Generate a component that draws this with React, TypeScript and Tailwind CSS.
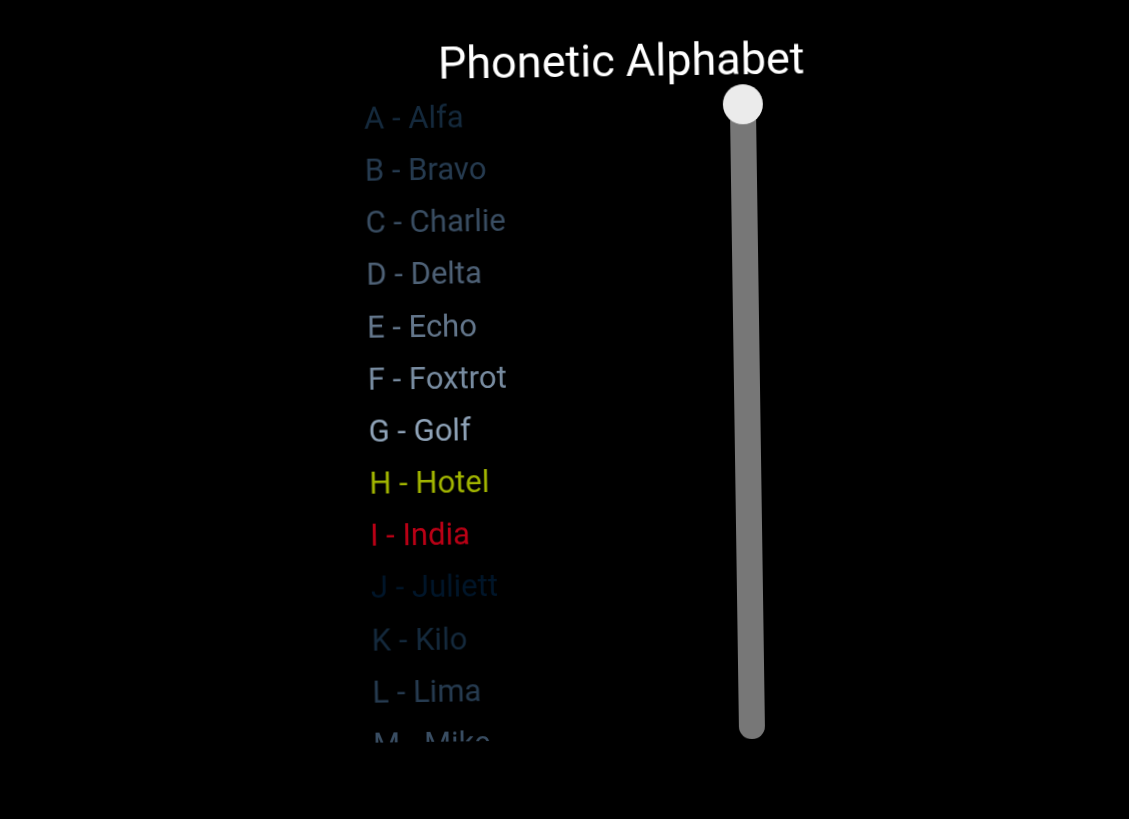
import { useState } from 'react';

const words = [
  { text: 'A - Alfa', color: 'text-[#14293c]' },
  { text: 'B - Bravo', color: 'text-[#263b50]' },
  { text: 'C - Charlie', color: 'text-[#394d62]' },
  { text: 'D - Delta', color: 'text-[#4e6176]' },
  { text: 'E - Echo', color: 'text-[#63768b]' },
  { text: 'F - Foxtrot', color: 'text-[#788ca1]' },
  { text: 'G - Golf', color: 'text-[#8fa3b8]' },
  { text: 'H - Hotel', color: 'text-[#a2b500]' },
  { text: 'I - India', color: 'text-[#ba0015]' },
  { text: 'J - Juliett', color: 'text-[#001529]' },
  { text: 'K - Kilo', color: 'text-[#14293c]' },
  { text: 'L - Lima', color: 'text-[#263b50]' },
  { text: 'M - Mike', color: 'text-[#394d62]' },
];

function WordList() {
  return (
    <ul className="mt-[3px] grid h-[678px] text-[31px] leading-[52px]">
      {words.map((word) => (
        <li key={word.text} className={word.color}>
          {word.text}
        </li>
      ))}
    </ul>
  );
}

function ScrollSlider() {
  const [position, setPosition] = useState(0);
  return (
    <input
      type="range"
      aria-label="Scroll position"
      min={0}
      max={100}
      value={position}
      onChange={(event) => setPosition(Number(event.target.value))}
      className="m-0 h-[655px] w-10 shrink-0 cursor-pointer appearance-none bg-transparent [writing-mode:vertical-lr] [&::-webkit-slider-runnable-track]:h-full [&::-webkit-slider-runnable-track]:w-[26px] [&::-webkit-slider-runnable-track]:rounded-full [&::-webkit-slider-runnable-track]:bg-[#777777] [&::-webkit-slider-thumb]:-ml-[7px] [&::-webkit-slider-thumb]:size-10 [&::-webkit-slider-thumb]:appearance-none [&::-webkit-slider-thumb]:rounded-full [&::-webkit-slider-thumb]:bg-[#ebebeb]"
    />
  );
}

export default function App() {
  return (
    <main className="flex min-h-screen items-start justify-center overflow-hidden bg-black pt-9 pl-[122px] font-[Roboto,sans-serif]">
      <section className="w-[516px] max-w-full rotate-[-0.83deg] will-change-transform">
        <h1 className="text-center text-[45px] leading-[50px] whitespace-nowrap text-white">
          Phonetic Alphabet
        </h1>
        <div className="flex items-start pr-[117px]">
          <div className="h-[653px] grow overflow-hidden">
            <WordList />
          </div>
          <ScrollSlider />
        </div>
      </section>
    </main>
  );
}
